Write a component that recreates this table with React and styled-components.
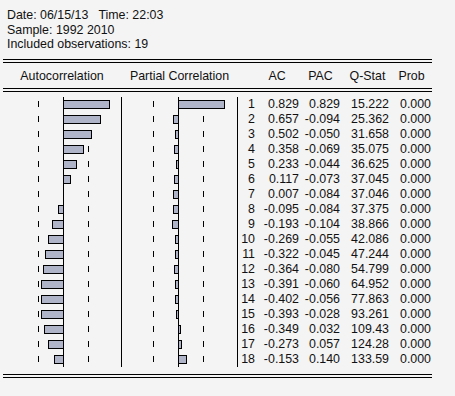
import React from 'react';
import styled, { createGlobalStyle } from 'styled-components';

const GlobalStyle = createGlobalStyle`
	body {
		margin: 0;
		background: #f4f4f4;
		font-family: "Liberation Sans", Arial, sans-serif;
		font-size: 12.4px;
		color: #111;
	}
`;

const ROW_H = 15;
const SCALE = 55.6;
const COLS = '118px 1px 115px 1px 17px 44px 41px 49px 42px';

const rows = [
	[1, 0.829, 0.829, '15.222'],
	[2, 0.657, -0.094, '25.362'],
	[3, 0.502, -0.05, '31.658'],
	[4, 0.358, -0.069, '35.075'],
	[5, 0.233, -0.044, '36.625'],
	[6, 0.117, -0.073, '37.045'],
	[7, 0.007, -0.084, '37.046'],
	[8, -0.095, -0.084, '37.375'],
	[9, -0.193, -0.104, '38.866'],
	[10, -0.269, -0.055, '42.086'],
	[11, -0.322, -0.045, '47.244'],
	[12, -0.364, -0.08, '54.799'],
	[13, -0.391, -0.06, '64.952'],
	[14, -0.402, -0.056, '77.863'],
	[15, -0.393, -0.028, '93.261'],
	[16, -0.349, 0.032, '109.43'],
	[17, -0.273, 0.057, '124.28'],
	[18, -0.153, 0.14, '133.59'],
];

const Page = styled.div`
	padding-top: 8px;
`;

const Info = styled.div`
	padding-left: 7px;
	line-height: 14.5px;
	white-space: pre;
`;

const Table = styled.div`
	margin: 7.5px 0 0 3px;
	width: 429px;
`;

const DoubleRule = styled.div`
	height: 2px;
	border-top: 1px solid #000;
	border-bottom: 1px solid #000;
`;

const HeaderRow = styled.div`
	display: grid;
	grid-template-columns: ${COLS};
	height: 25px;
	align-items: center;
	text-align: center;
`;

const HeadCell = styled.div`
	grid-column: ${(p) => p.$col};
	padding-left: ${(p) => p.$shift || 0}px;
	white-space: nowrap;
`;

const Body = styled.div`
	display: flex;
	padding: 5px 0 7px;
`;

const PlotSvg = styled.svg`
	display: block;
	flex: none;
	border-right: 1px solid #000;
`;

const Numbers = styled.div`
	display: grid;
	grid-template-columns: 17px 44px 41px 49px 42px;
	grid-auto-rows: ${ROW_H}px;
	line-height: ${ROW_H}px;
	text-align: right;
`;

function Plot({ width, axis, dashes, values }) {
	const h = values.length * ROW_H;
	return (
		<PlotSvg width={width} height={h} shapeRendering="crispEdges">
			{values.map((v, i) => {
				const y0 = i * ROW_H;
				const len = Math.round(Math.abs(v) * SCALE);
				const x = v >= 0 ? axis : axis - len;
				return (
					<g key={i}>
						{dashes.map((d) => (
							<line key={d} x1={d + 0.5} x2={d + 0.5} y1={y0 + 4} y2={y0 + 10} stroke="#000" />
						))}
						{len > 0 && (
							<rect x={x + 0.5} y={y0 + 3.5} width={len} height={8} fill="#b0b4c8" stroke="#000" />
						)}
					</g>
				);
			})}
			<line x1={axis + 0.5} x2={axis + 0.5} y1={0} y2={h} stroke="#000" />
		</PlotSvg>
	);
}

const fmt = (v) => v.toFixed(3);

export default function App() {
	return (
		<Page>
			<GlobalStyle />
			<Info>
				<div>Date: 06/15/13   Time: 22:03</div>
				<div>Sample: 1992 2010</div>
				<div>Included observations: 19</div>
			</Info>
			<Table>
				<DoubleRule />
				<HeaderRow>
					<HeadCell $col="1">Autocorrelation</HeadCell>
					<HeadCell $col="3">Partial Correlation</HeadCell>
					<HeadCell $col="6">AC</HeadCell>
					<HeadCell $col="7" $shift={2}>PAC</HeadCell>
					<HeadCell $col="8" $shift={6}>Q-Stat</HeadCell>
					<HeadCell $col="9" $shift={3}>Prob</HeadCell>
				</HeaderRow>
				<DoubleRule />
				<Body>
					<Plot width={118} axis={60} dashes={[35, 85]} values={rows.map((r) => r[1])} />
					<Plot width={115} axis={56} dashes={[31, 81]} values={rows.map((r) => r[2])} />
					<Numbers>
						{rows.map(([lag, ac, pac, q]) => (
							<React.Fragment key={lag}>
								<div>{lag}</div>
								<div>{fmt(ac)}</div>
								<div>{fmt(pac)}</div>
								<div>{q}</div>
								<div>0.000</div>
							</React.Fragment>
						))}
					</Numbers>
				</Body>
				<DoubleRule />
			</Table>
		</Page>
	);
}
